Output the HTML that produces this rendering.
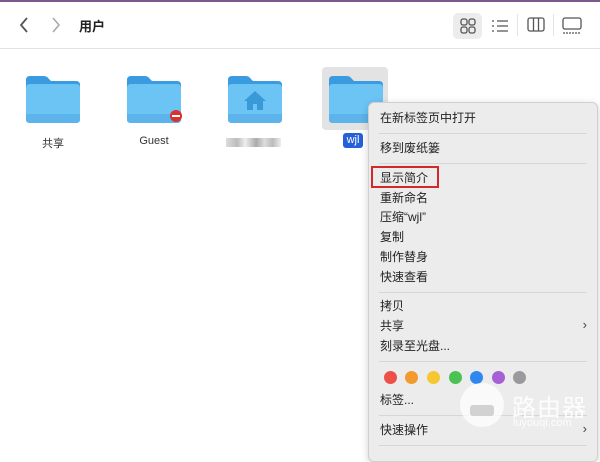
<!DOCTYPE html>
<html><head><meta charset="utf-8"><style>
*{margin:0;padding:0;box-sizing:border-box}
body{width:600px;height:450px;overflow:hidden;background:#fff;font-family:"Liberation Sans","Noto Sans CJK SC",sans-serif;position:relative;color:#222}
.top{position:absolute;left:0;top:0;width:600px;height:2px;background:#7a5a8a}
.tb{position:absolute;left:0;top:2px;width:600px;height:47px;border-bottom:1px solid #e2e2e2}
.abs{position:absolute}
.f{position:absolute;width:56px;height:48px}
.lbl{position:absolute;font-size:11px;text-align:center;width:80px;color:#333}
.menu{position:absolute;left:368px;top:102px;width:230px;height:360px;background:#ececec;border:1px solid #d0d0d0;border-radius:6px;box-shadow:0 2px 8px rgba(0,0,0,.18)}
.mi{position:absolute;left:11px;font-size:12px;color:#222;line-height:14px}
.sep{position:absolute;left:10px;width:208px;height:1px;background:#d6d6d6}
.dot{position:absolute;top:268px;width:13px;height:13px;border-radius:50%}
.arr{position:absolute;right:10px;font-size:13px;color:#444}
</style></head><body>
<div class="top"></div>
<div class="tb">
<svg class="abs" style="left:18px;top:14px" width="12" height="18"><path d="M9 2 L3 9 L9 16" stroke="#555" stroke-width="1.8" fill="none"/></svg>
<svg class="abs" style="left:50px;top:14px" width="12" height="18"><path d="M3 2 L9 9 L3 16" stroke="#aaa" stroke-width="1.6" fill="none"/></svg>
<div class="abs" style="left:79px;top:14px;font-size:13px;font-weight:bold;color:#222">用户</div>
<div class="abs" style="left:453px;top:11px;width:29px;height:26px;background:#ececec;border-radius:5px"></div>
<svg class="abs" style="left:459px;top:15px" width="18" height="18"><g fill="none" stroke="#555" stroke-width="1.3"><rect x="2" y="2" width="6" height="6" rx="2"/><rect x="10" y="2" width="6" height="6" rx="2"/><rect x="2" y="10" width="6" height="6" rx="2"/><rect x="10" y="10" width="6" height="6" rx="2"/></g></svg>
<svg class="abs" style="left:490px;top:15px" width="20" height="18"><g stroke="#555" stroke-width="1.3"><path d="M7 4H18M7 9H18M7 14H18"/><path d="M2 4H4M2 9H4M2 14H4"/></g></svg>
<div class="abs" style="left:517px;top:12px;width:1px;height:22px;background:#e4e4e4"></div>
<svg class="abs" style="left:526px;top:14px" width="20" height="18"><g fill="none" stroke="#555" stroke-width="1.3"><rect x="2" y="2" width="16" height="13" rx="2"/><path d="M7.5 2V15M12.5 2V15"/></g></svg>
<div class="abs" style="left:553px;top:12px;width:1px;height:22px;background:#e4e4e4"></div>
<svg class="abs" style="left:561px;top:14px" width="22" height="20"><g fill="none" stroke="#555" stroke-width="1.3"><rect x="2" y="2" width="18" height="11" rx="2"/><path d="M2 17H20" stroke-dasharray="2 1"/></g></svg>
</div>

<div class="abs" style="left:322px;top:67px;width:66px;height:63px;background:#e3e3e3;border-radius:4px"></div>

<svg width="0" height="0" style="position:absolute"><defs><g id="fd"><path d="M0 4Q0 0 4 0H18Q21 0 23 3L25 5H50Q54 5 54 9V43Q54 47 50 47H4Q0 47 0 43Z" fill="#3b9be0"/><path d="M0 12Q0 8 4 8H50Q54 8 54 12V43Q54 47 50 47H4Q0 47 0 43Z" fill="#6cc4f5"/><path d="M0 38H54V43Q54 47 50 47H4Q0 47 0 43Z" fill="#5cb4ea"/></g></defs></svg>
<svg class="f" style="left:26px;top:76px"><use href="#fd"/></svg>
<svg class="f" style="left:127px;top:76px"><use href="#fd"/><circle cx="49" cy="40" r="6" fill="#d8312e"/><rect x="45" y="39" width="8" height="2" fill="#fff"/></svg>
<svg class="f" style="left:228px;top:76px"><use href="#fd"/><path d="M27 15L16 25H19V34H25V28H29V34H35V25H38Z" fill="#3a9ad8"/></svg>
<svg class="f" style="left:329px;top:76px"><use href="#fd"/></svg>

<div class="lbl" style="left:13px;top:135px">共享</div>
<div class="lbl" style="left:114px;top:135px">Guest</div>
<div class="abs" style="left:226px;top:138px;width:55px;height:9px;background:linear-gradient(90deg,#ddd,#bbb 20%,#eee 35%,#aaa 55%,#ddd 70%,#bbb 85%,#eee)"></div>
<div class="abs" style="left:343px;top:133px;width:20px;height:15px;background:#2560d8;border-radius:3px;color:#fff;font-size:11px;text-align:center;line-height:15px">wjl</div>

<div class="menu">
<div class="mi" style="top:8px">在新标签页中打开</div>
<div class="sep" style="top:30px"></div>
<div class="mi" style="top:38px">移到废纸篓</div>
<div class="sep" style="top:60px"></div>
<div class="abs" style="left:2px;top:63px;width:68px;height:22px;border:2px solid #d02a2a"></div>
<div class="mi" style="top:68px">显示简介</div>
<div class="mi" style="top:88px">重新命名</div>
<div class="mi" style="top:107px">压缩“wjl”</div>
<div class="mi" style="top:127px">复制</div>
<div class="mi" style="top:147px">制作替身</div>
<div class="mi" style="top:167px">快速查看</div>
<div class="sep" style="top:189px"></div>
<div class="mi" style="top:196px">拷贝</div>
<div class="mi" style="top:216px">共享</div><div class="arr" style="top:214px">›</div>
<div class="mi" style="top:236px">刻录至光盘...</div>
<div class="sep" style="top:258px"></div>
<div class="dot" style="left:15px;background:#ec5046"></div>
<div class="dot" style="left:36px;background:#f29a2e"></div>
<div class="dot" style="left:58px;background:#f6c72f"></div>
<div class="dot" style="left:80px;background:#4cc252"></div>
<div class="dot" style="left:101px;background:#2f88f0"></div>
<div class="dot" style="left:123px;background:#a660d6"></div>
<div class="dot" style="left:144px;background:#9a9a9e"></div>
<div class="mi" style="top:290px">标签...</div>
<div class="sep" style="top:312px"></div>
<div class="mi" style="top:320px">快速操作</div><div class="arr" style="top:318px">›</div>
<div class="sep" style="top:342px"></div>
</div>

<div class="abs" style="left:460px;top:383px;width:44px;height:44px;border-radius:50%;background:rgba(255,255,255,.75)"></div>
<div class="abs" style="left:470px;top:405px;width:24px;height:11px;border-radius:3px;background:rgba(200,200,200,.8)"></div>
<div class="abs" style="left:512px;top:388px;font-size:24px;color:rgba(255,255,255,.9);letter-spacing:1px">路由器</div>
<div class="abs" style="left:513px;top:417px;font-size:11px;color:rgba(255,255,255,.9)">luyouqi.com</div>
</body></html>
